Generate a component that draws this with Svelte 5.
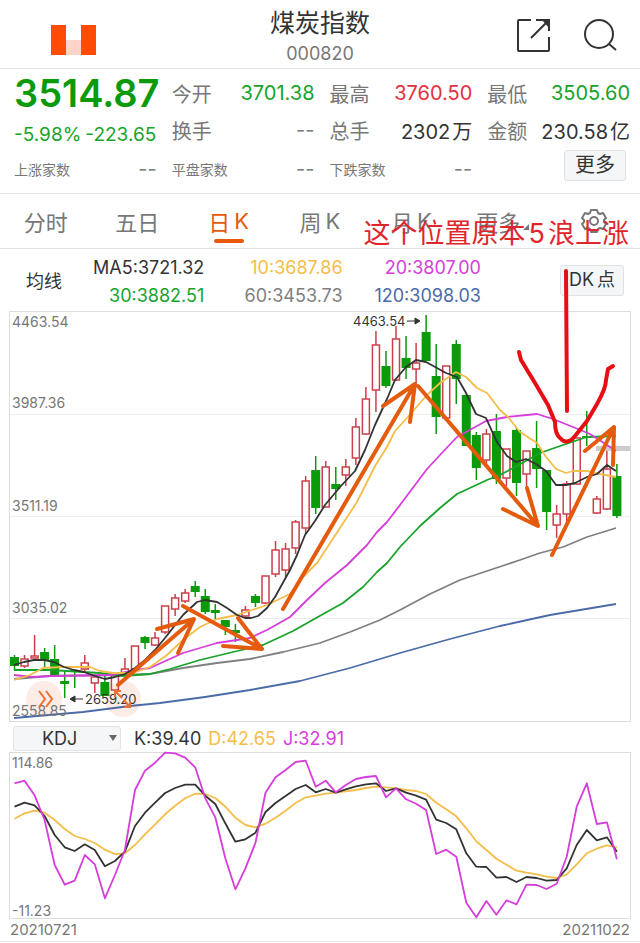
<script>
  const tabs = [
    { han: '分时' },
    { han: '五日' },
    { han: '日', latin: 'K', active: true },
    { han: '周', latin: 'K' },
    { han: '月', latin: 'K' },
    { han: '更多', menu: true }
  ];

  const averages = [
    { text: 'MA5:3721.32', tone: 'dark' },
    { text: '10:3687.86', tone: 'amber' },
    { text: '20:3807.00', tone: 'pink' },
    { text: '30:3882.51', tone: 'green' },
    { text: '60:3453.73', tone: 'grey' },
    { text: '120:3098.03', tone: 'blue' }
  ];

  const step = 10.04;
  const xAt = (i) => 14.5 + i * step;

  // direction, high, low, body top, body bottom
  const candles = [
    ['d', 655, 670, 657, 666], ['u', 655, 668, 659, 666], ['u', 635, 658, 656, 658],
    ['d', 648, 668, 652, 660], ['d', 645, 677, 659, 676], ['d', 671, 698, 681, 684],
    ['d', 670, 688, 670, 671], ['u', 655, 673, 663, 669], ['u', 677, 693, 677, 683],
    ['d', 676, 696, 682, 696], ['u', 673, 691, 673, 690], ['u', 658, 673, 669, 673],
    ['u', 646, 670, 646, 669], ['d', 636, 649, 637, 643], ['u', 632, 646, 638, 645],
    ['u', 606, 634, 606, 632], ['u', 594, 616, 598, 609], ['u', 589, 603, 593, 601],
    ['d', 581, 597, 586, 592], ['d', 589, 614, 596, 612], ['d', 604, 620, 610, 613],
    ['d', 620, 635, 620, 627], ['d', 624, 642, 630, 633], ['u', 606, 617, 610, 616],
    ['d', 594, 607, 596, 603], ['u', 576, 604, 576, 603], ['u', 541, 577, 550, 574],
    ['u', 543, 577, 549, 570], ['u', 520, 554, 522, 548], ['u', 476, 534, 481, 528],
    ['d', 456, 514, 470, 508], ['u', 461, 507, 467, 507], ['d', 467, 500, 484, 489],
    ['u', 459, 486, 467, 475], ['u', 418, 465, 427, 458], ['u', 387, 435, 399, 434],
    ['u', 331, 412, 345, 390], ['d', 351, 388, 366, 386], ['u', 326, 381, 339, 380],
    ['d', 336, 379, 358, 368], ['u', 343, 385, 363, 369], ['d', 315, 361, 332, 361],
    ['d', 344, 434, 376, 417], ['u', 366, 418, 366, 418], ['d', 340, 404, 344, 379],
    ['d', 395, 446, 395, 446], ['d', 432, 480, 435, 468], ['u', 429, 464, 434, 460],
    ['d', 414, 484, 431, 479], ['u', 449, 486, 449, 478], ['d', 428, 496, 430, 483],
    ['u', 451, 489, 451, 474], ['d', 421, 488, 448, 469], ['d', 470, 530, 470, 512],
    ['u', 505, 538, 514, 525], ['u', 481, 525, 484, 514], ['u', 438, 485, 438, 484],
    ['d', 411, 446, 436, 438], ['u', 496, 514, 499, 513], ['u', 451, 510, 469, 509],
    ['d', 464, 518, 476, 516]
  ];

  const maLines = [
    { tone: 'blue', points: '14,718 83,712 130,706 160,703 205,697 250,690 300,681 350,668 400,653 450,639 500,626 550,615 616,604' },
    { tone: 'grey', points: '14,679 50,676 120,675 150,674 183,668 217,663 250,659 283,652 320,643 350,632 380,620 400,610 430,594 460,580 490,570 520,560 540,553 563,547 587,537 616,528' },
    { tone: 'green', points: '14,670 50,670 100,673 123,676 150,674 170,669 200,660 233,652 263,645 293,631 325,613 343,603 363,587 377,572 387,563 400,547 420,526 440,508 457,494 487,480 500,475 515,467 540,453 563,445 587,437 616,436' },
    { tone: 'pink', points: '14,675 33,677 50,676 110,675 143,669 150,668 183,653 217,643 237,640 250,638 267,630 290,617 307,600 325,583 347,565 367,545 377,532 387,522 400,505 427,469 440,455 457,437 466,432 486,421 507,417 537,414 553,419 573,427 590,434 607,445 616,451' },
    { tone: 'amber', points: '14,680 30,675 43,668 63,667 90,667 100,671 113,673 133,673 150,667 167,655 183,640 200,627 217,619 237,615 267,605 290,594 303,577 317,563 340,528 357,502 375,466 387,447 395,431 407,418 427,395 440,383 456,372 466,377 477,388 487,393 500,410 508,417 520,432 537,443 546,457 556,469 566,473 573,471 587,471 600,474 616,477' },
    { tone: 'dark', points: '14,665 24,662 34,660 44,660 54,662 64,667 74,670 84,672 95,676 105,679 115,677 125,674 135,668 145,660 155,650 165,638 183,615 197,602 205,600 217,602 227,608 237,615 245,618 251,618 258,616 267,608 275,597 290,570 297,555 305,535 315,521 325,505 340,487 355,471 365,450 375,425 387,399 395,380 406,367 416,360 426,362 437,368 446,373 457,377 466,393 476,414 486,418 497,442 507,456 516,462 526,459 536,464 546,471 556,485 566,485 575,483 587,477 597,474 607,465 616,471' }
  ];

  const scaleLabels = [
    ['4463.54', 327], ['3987.36', 408], ['3511.19', 511], ['3035.02', 613], ['2558.85', 716]
  ];

  // oscillator levels, three units to a pixel
  const kdj = [
    { tone: 'amber', levels: [296, 280, 272, 278, 300, 327, 348, 357, 369, 389, 402, 400, 375, 343, 313, 283, 257, 235, 221, 222, 234, 260, 293, 315, 322, 311, 293, 272, 249, 232, 227, 221, 218, 214, 210, 204, 200, 202, 205, 210, 213, 222, 248, 268, 289, 325, 364, 390, 416, 434, 452, 458, 463, 470, 474, 463, 433, 400, 386, 376, 382] },
    { tone: 'dark', levels: [260, 248, 256, 288, 345, 382, 393, 373, 390, 439, 423, 395, 318, 278, 248, 219, 204, 194, 194, 227, 252, 310, 365, 358, 338, 276, 249, 228, 207, 195, 217, 207, 218, 208, 199, 193, 190, 213, 205, 218, 227, 239, 299, 309, 328, 400, 440, 441, 473, 471, 486, 471, 474, 482, 480, 445, 375, 330, 361, 352, 395] },
    { tone: 'pink', levels: [190, 182, 226, 300, 435, 494, 482, 405, 433, 535, 465, 390, 210, 152, 128, 98, 100, 113, 142, 235, 292, 415, 508, 445, 368, 218, 172, 150, 126, 122, 200, 182, 217, 195, 177, 171, 168, 232, 205, 238, 251, 270, 402, 389, 410, 548, 592, 543, 584, 541, 553, 494, 495, 507, 491, 410, 260, 190, 312, 307, 418] }
  ];
  const trace = (levels) => levels.map((v, i) => `${xAt(i).toFixed(1)},${(720 + v / 3).toFixed(1)}`).join(' ');
</script>

<div class="page">
  <header>
    <svg class="logo" viewBox="0 0 45 30" aria-hidden="true">
      <rect width="15" height="30" fill="#ff4b05" />
      <rect x="15" y="15" width="15" height="15" fill="#ffd3c8" />
      <rect x="30" width="15" height="30" fill="#ff4b05" />
    </svg>
    <div class="title">
      <h1>煤炭指数</h1>
      <p>000820</p>
    </div>
    <div class="actions">
      <button aria-label="分享">
        <svg width="36" height="36" viewBox="0 0 36 36" fill="none" stroke="#333" stroke-width="2">
          <path d="M16 3H4Q3 3 3 4V33Q3 34 4 34H33Q34 34 34 33V20M21 3H34V14M16 21L34 3" />
          <path d="M27 3H34V11Z" fill="#333" stroke="none" />
        </svg>
      </button>
      <button aria-label="搜索">
        <svg width="36" height="36" viewBox="0 0 36 36" fill="none" stroke="#333" stroke-width="2">
          <circle cx="18" cy="17" r="14" /><path d="M28 27L35 33" />
        </svg>
      </button>
    </div>
  </header>

  <section class="quote">
    <div class="cell"><strong>3514.87</strong></div>
    <div class="cell"><span>今开</span><b class="green">3701.38</b></div>
    <div class="cell"><span>最高</span><b class="red">3760.50</b></div>
    <div class="cell"><span>最低</span><b class="green">3505.60</b></div>
    <div class="cell change green"><span>-5.98%</span><span>-223.65</span></div>
    <div class="cell"><span>换手</span><b class="grey">--</b></div>
    <div class="cell"><span>总手</span><b>2302<i>万</i></b></div>
    <div class="cell"><span>金额</span><b>230.58<i>亿</i></b></div>
    <div class="cell small"><span>上涨家数</span><b class="grey">--</b></div>
    <div class="cell small"><span>平盘家数</span><b class="grey">--</b></div>
    <div class="cell small"><span>下跌家数</span><b class="grey">--</b></div>
    <div class="cell end"><button class="chip more">更多</button></div>
  </section>

  <nav>
    {#each tabs as tab}
      <button class="tab" class:active={tab.active}>
        {tab.han}{#if tab.latin}<i>{tab.latin}</i>{/if}{#if tab.menu}<svg width="6" height="6" viewBox="0 0 6 6"><path d="M6 0V6H0Z" fill="#777" /></svg>{/if}
      </button>
    {/each}
    <button class="tab" aria-label="设置">
      <svg class="gear" width="26" height="26" viewBox="0 0 26 26" fill="none" stroke="#777" stroke-width="2" stroke-linejoin="round">
        <path d="M10 2H16L17 5L19 6L22 5L25 10L23 12V14L25 16L22 21L19 20L17 21L16 24H10L9 21L7 20L4 21L1 16L3 14V12L1 10L4 5L7 6L9 5Z" />
        <circle cx="13" cy="13" r="4" />
      </svg>
    </button>
    <p class="remark">这个位置原本<i>5</i>浪上涨</p>
  </nav>

  <section class="averages">
    <h2>均线</h2>
    <div class="values">
      {#each averages as avg}<span class={avg.tone}>{avg.text}</span>{/each}
    </div>
    <button class="chip">DK<i>点</i></button>
  </section>

  <svg class="chart marked" viewBox="9 311 622 411" role="img" aria-label="日K">
    <g fill="none" stroke="#eee">
      <path d="M10 414.500H630M10 516.500H630M10 618.500H630" />
      <rect x="9.500" y="311.500" width="621" height="410" stroke="#ddd" />
    </g>
    <path d="M596 448.500H630" stroke="#ccc" stroke-width="5" />
    <g fill="#fdebe5"><circle cx="44" cy="699" r="18" /><circle cx="123" cy="699" r="18" /></g>
    {#each candles as [dir, high, low, top, bottom], i}
      {#if dir === 'u'}
        <g fill="none" stroke="#c9404b" stroke-width="1.500">
          <path d="M{xAt(i)} {high}V{top}M{xAt(i)} {bottom}V{low}" />
          <rect x={xAt(i) - 3.5} y={top} width="7" height={bottom - top} />
        </g>
      {:else}
        <path d="M{xAt(i)} {high}V{low}" stroke="#0a9a0a" stroke-width="1.500" />
        <rect x={xAt(i) - 4.5} y={top} width="9" height={bottom - top} fill="#0a9a0a" />
      {/if}
    {/each}
    {#each maLines as line}<polyline class="line {line.tone}" points={line.points} />{/each}
    <g class="scale">
      {#each scaleLabels as [label, y]}<text x="12" {y}>{label}</text>{/each}
    </g>
    <g class="peak">
      <text x="353" y="326">4463.54</text>
      <text x="85" y="704">2659.20</text>
      <path d="M407 321H419M415 318L420 321L415 324ZM83 699H71M75 696L70 699L75 702Z" />
    </g>
    <path d="M39 691L45 699L39 707M46 691L52 699L46 707M122 698L115 691M115 697V691H121M124 700L130 707M124 707H130V701" fill="none" stroke="#ea7132" stroke-width="2" />
    <g class="arrows">
      <path d="M118 685L194 619M157 629L194 619L178 653" />
      <path d="M183 606L262 649M238 618L262 649L223 646" />
      <path d="M283 609L415 384M383 406L415 384L410 422" />
      <path d="M418 386L538 526M527 488L538 526L503 509" />
      <path d="M552 555L614 427M585 451L614 427L613 465" />
    </g>
    <path class="pen" d="M566 271L567 411M519 352L521 360L535 383L548 405L555 422Q555 434 560 438Q567 446 575 436L587 421L597 404Q606 388 606 380L608 369L613 366" />
  </svg>

  <section class="indicator">
    <label class="picker">
      <select aria-label="指标"><option>KDJ</option></select>
      <svg width="8" height="6" viewBox="0 0 8 6"><path d="M0 0H8L4 6Z" fill="#666" /></svg>
    </label>
    <span class="dark">K:39.40</span><span class="amber">D:42.65</span><span class="pink">J:32.91</span>
  </section>

  <svg class="chart" viewBox="9 752 622 167" role="img" aria-label="KDJ">
    <rect x="9.500" y="752.500" width="621" height="166" fill="none" stroke="#ddd" />
    {#each kdj as series}<polyline class="line {series.tone}" points={trace(series.levels)} />{/each}
    <g class="scale"><text x="12" y="768">114.86</text><text x="12" y="916">-11.23</text></g>
  </svg>

  <footer><time>20210721</time><time>20211022</time></footer>
</div>

<style>
  :global(body) { margin: 0; background: #fff; }
  .page {
    font-family: Inter, 'Noto Sans CJK SC', sans-serif;
    color: #333;
    background: #fff;
  }
  h1, h2, p { margin: 0; font-weight: 400; }
  i { font-style: normal; }
  b { font-weight: 400; }
  button, select { font: inherit; color: inherit; background: none; border: 0; padding: 0; margin: 0; }
  button { cursor: pointer; }
  svg { display: block; }

  header {
    display: grid;
    grid-template-columns: 1fr auto 1fr;
    align-items: center;
    height: 68px;
    border-bottom: 1px solid #e4e4e4;
  }
  .logo { width: 45px; height: 30px; margin: 10px 0 0 51px; }
  .title { padding-top: 8px; text-align: center; }
  h1 { font-size: 25px; line-height: 30px; }
  .title p { font-size: 18px; line-height: 32px; color: #777; }
  .actions { display: flex; justify-content: flex-end; gap: 30px; padding-right: 23px; }

  .quote {
    display: grid;
    grid-template-columns: repeat(4, minmax(0, 1fr));
    grid-template-rows: 40px 34px 44px;
    column-gap: 15px;
    padding: 4px 10px 2px 14px;
    border-bottom: 1px solid #e4e4e4;
  }
  .cell {
    display: flex;
    justify-content: space-between;
    align-items: center;
    font-size: 20px;
    white-space: nowrap;
  }
  .cell span { color: #777; }
  .cell i { margin-left: 2px; }
  .cell strong { font-size: 38px; font-weight: 600; color: #0a9a0a; }
  .change { gap: 4px; justify-content: flex-start; padding-top: 8px; }
  .cell.change span { font-size: 19px; color: inherit; }
  .cell.small span { font-size: 14px; }
  .end { justify-content: flex-end; }

  .chip {
    height: 31px;
    padding: 0 8px;
    border: 1px solid #dfe2e5;
    border-radius: 3px;
    background: #f5f6f8;
    font-size: 18px;
    line-height: 28px;
    white-space: nowrap;
  }
  .chip i { margin-left: 3px; }
  .more { padding: 0 10px; font-size: 20px; margin: 0 4px 8px 0; }

  nav {
    position: relative;
    display: grid;
    grid-template-columns: repeat(7, 1fr);
    height: 54px;
    border-bottom: 1px solid #e4e4e4;
  }
  .tab {
    position: relative;
    display: flex;
    justify-content: center;
    align-items: center;
    font-size: 22px;
    color: #777;
  }
  .tab i { margin-left: 4px; }
  .tab svg:not(.gear) { align-self: flex-end; margin: 0 0 18px 3px; }
  .active { color: #e8590c; }
  .active::after {
    content: '';
    position: absolute;
    bottom: 5px;
    width: 30px;
    height: 4px;
    border-radius: 2px;
    background: #e8590c;
  }
  .remark {
    position: absolute;
    right: 11px;
    bottom: -6px;
    font-size: 27px;
    line-height: 40px;
    color: #e0262b;
    white-space: nowrap;
    pointer-events: none;
  }
  .remark i { margin: 0 3px; }

  .averages {
    display: flex;
    align-items: center;
    height: 62px;
    padding: 0 16px 0 26px;
  }
  h2 { margin-right: 4px; font-size: 18px; }
  .values {
    display: grid;
    grid-template-columns: repeat(3, 1fr);
    flex: 1;
    padding-top: 4px;
    margin-right: 79px;
    font-size: 18px;
    line-height: 28px;
    text-align: right;
  }

  .dark { color: #333; }
  .amber { color: #f5bd4a; }
  .pink { color: #d63ddb; }
  .green { color: #18a32a; }
  .grey { color: #808080; }
  .blue { color: #4a6ba8; }
  .red { color: #e5303f; }

  .chart { width: calc(100% - 18px); height: auto; margin: 0 9px; overflow: visible; }
  .marked { position: relative; pointer-events: none; }
  .line { fill: none; stroke: currentColor; stroke-width: 1.8; stroke-linejoin: round; }
  .scale { font-size: 14px; fill: #777; }
  .peak { font-size: 13px; fill: #333; stroke: none; }
  .peak path { stroke: #333; }
  .arrows { fill: none; stroke: #e55b0d; stroke-width: 4; stroke-linejoin: round; stroke-linecap: round; }
  .pen { fill: none; stroke: #e60f14; stroke-width: 4; stroke-linejoin: round; stroke-linecap: round; }

  .indicator {
    display: flex;
    align-items: center;
    gap: 7px;
    height: 30px;
    padding: 2px 13px 0;
    box-sizing: border-box;
    font-size: 18px;
    white-space: nowrap;
  }
  .picker { position: relative; margin-right: 6px; }
  select {
    appearance: none;
    display: block;
    width: 108px;
    height: 25px;
    padding: 0 0 0 28px;
    border: 1px solid #e2e4e8;
    border-radius: 3px;
    background: #f5f6f8;
  }
  .picker svg { position: absolute; right: 4px; top: 9px; pointer-events: none; }

  footer {
    display: flex;
    justify-content: space-between;
    padding: 0 10px;
    border-bottom: 1px solid #e4e4e4;
    font-size: 15px;
    line-height: 22px;
    color: #777;
  }
</style>
